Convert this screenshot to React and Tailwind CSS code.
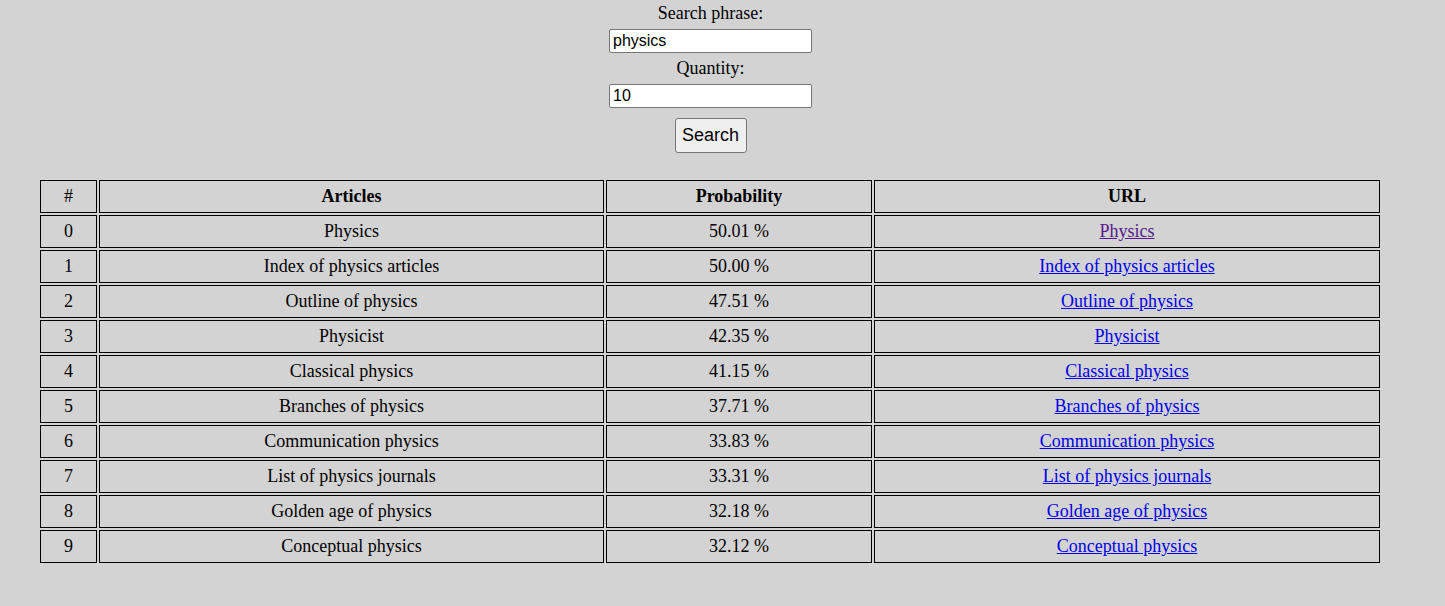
import React from 'react';

const rows = [
  ['Physics', '50.01 %', true],
  ['Index of physics articles', '50.00 %'],
  ['Outline of physics', '47.51 %'],
  ['Physicist', '42.35 %'],
  ['Classical physics', '41.15 %'],
  ['Branches of physics', '37.71 %'],
  ['Communication physics', '33.83 %'],
  ['List of physics journals', '33.31 %'],
  ['Golden age of physics', '32.18 %'],
  ['Conceptual physics', '32.12 %'],
];

const cell = 'border border-black h-[33px] p-0 text-center align-middle';

export default function App() {
  return (
    <div className="min-h-[606px] bg-[#d3d3d3] text-black text-[18px] font-['Liberation_Serif','Times_New_Roman',serif]">
      <div className="flex flex-col items-center pt-[3px] pr-[24px]">
        <label className="leading-[20px]">Search phrase:</label>
        <input
          defaultValue="physics"
          className="mt-[6px] w-[203px] h-[24px] bg-white border border-[#767676] rounded-[2px] px-[3px] text-[16px] font-['Liberation_Sans',Arial,sans-serif] outline-none"
        />
        <label className="mt-[5px] leading-[20px]">Quantity:</label>
        <input
          defaultValue="10"
          className="mt-[6px] w-[203px] h-[24px] bg-white border border-[#767676] rounded-[2px] px-[3px] text-[16px] font-['Liberation_Sans',Arial,sans-serif] outline-none"
        />
        <button className="mt-[10px] w-[72px] h-[35px] bg-[#efefef] border border-[#767676] rounded-[3px] text-[18px] font-['Liberation_Sans',Arial,sans-serif]">
          Search
        </button>
      </div>

      <table className="mt-[25px] ml-[38px] w-[1344px] table-fixed border-separate border-spacing-[2px]">
        <colgroup>
          <col className="w-[57px]" />
          <col className="w-[505px]" />
          <col className="w-[266px]" />
          <col className="w-[506px]" />
        </colgroup>
        <thead>
          <tr>
            <th className={`${cell} font-normal`}>#</th>
            <th className={`${cell} font-bold`}>Articles</th>
            <th className={`${cell} font-bold`}>Probability</th>
            <th className={`${cell} font-bold`}>URL</th>
          </tr>
        </thead>
        <tbody>
          {rows.map(([name, prob, visited], i) => (
            <tr key={i}>
              <td className={cell}>{i}</td>
              <td className={cell}>{name}</td>
              <td className={cell}>{prob}</td>
              <td className={cell}>
                <a
                  href="#"
                  className={`underline ${visited ? 'text-[#551a8b]' : 'text-[#0000ee]'}`}
                >
                  {name}
                </a>
              </td>
            </tr>
          ))}
        </tbody>
      </table>
    </div>
  );
}
